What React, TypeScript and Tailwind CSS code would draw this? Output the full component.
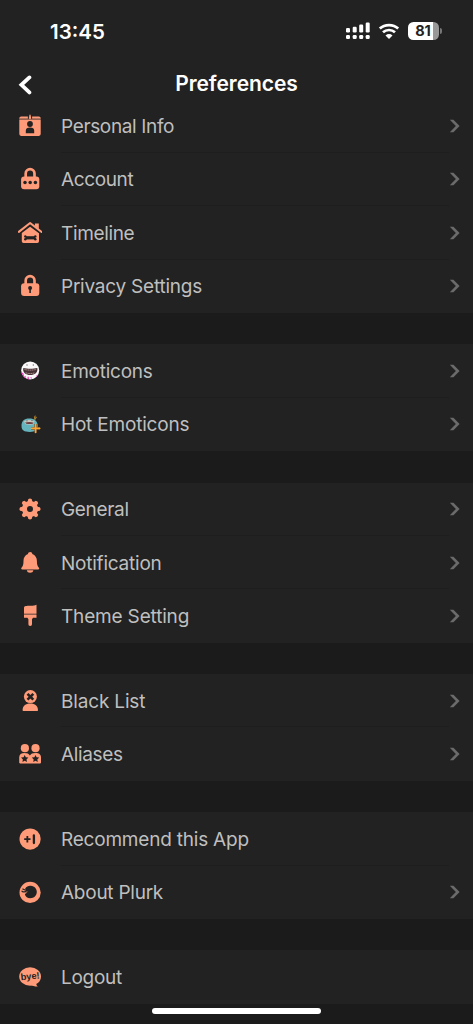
import type { ReactNode } from 'react';

const ORANGE = '#ff9b78';
const DARK = '#222222';

function Icon({ children }: { children: ReactNode }) {
  return (
    <svg width="24" height="24" viewBox="0 0 24 24" className="shrink-0">
      {children}
    </svg>
  );
}

const InfoIcon = () => (
  <Icon>
    <rect x="1.3" y="2.5" width="21.4" height="19.4" rx="1.8" fill={ORANGE} />
    <path d="M1 5.1h22" stroke={DARK} strokeWidth="0.8" />
    <path d="M10.4 1.8v3M13.6 1.8v3" stroke={DARK} strokeWidth="1" />
    <path d="M12 .8v4.5" stroke={ORANGE} strokeWidth="1.4" />
    <circle cx="12" cy="10" r="2.9" fill={DARK} />
    <path d="M7.8 19.2v-2.4c0-2.4 1.4-3.4 4.2-3.4s4.2 1 4.2 3.4v2.4z" fill={DARK} />
  </Icon>
);

const AccountIcon = () => (
  <Icon>
    <path d="M7.7 12V6.6a4.4 4.4 0 0 1 8.8 0V12" fill="none" stroke={ORANGE} strokeWidth="2.7" />
    <rect x="3.1" y="9.4" width="18.2" height="12.8" rx="3" fill={ORANGE} />
    <circle cx="7" cy="15.6" r="1.75" fill={DARK} />
    <circle cx="12.2" cy="15.6" r="1.75" fill={DARK} />
    <circle cx="17.4" cy="15.6" r="1.75" fill={DARK} />
  </Icon>
);

const TimelineIcon = () => (
  <Icon>
    <path d="M16.9 2.6h3.9v7l-3.9-3z" fill={ORANGE} />
    <path d="M3.8 12 12.1 5.7 21 12.2v8.1a1.7 1.7 0 0 1-1.7 1.7H5.5a1.7 1.7 0 0 1-1.7-1.7z" fill={ORANGE} />
    <path d="M.8 11.9 12.1 3l11.5 8.9" fill="none" stroke={DARK} strokeWidth="2.6" />
    <path d="M.8 10.9 12.1 2l11.5 8.9" fill="none" stroke={ORANGE} strokeWidth="2.1" strokeLinecap="round" strokeLinejoin="round" />
    <path d="M7.4 15.2h10v3.2h-10z" fill={DARK} />
    <circle cx="7.3" cy="15.4" r="1.2" fill={DARK} />
    <circle cx="7.3" cy="18.2" r="1.2" fill={DARK} />
    <circle cx="17.3" cy="15.4" r="1.2" fill={DARK} />
    <circle cx="17.3" cy="18.2" r="1.2" fill={DARK} />
  </Icon>
);

const PrivacyIcon = () => (
  <Icon>
    <path d="M7.7 12V6.5a4.4 4.4 0 0 1 8.8 0V12" fill="none" stroke={ORANGE} strokeWidth="2.7" />
    <rect x="3.1" y="9.2" width="18.2" height="12.8" rx="3" fill={ORANGE} />
    <circle cx="12.1" cy="13.9" r="2" fill={DARK} />
    <path d="M12.1 14v5" stroke={DARK} strokeWidth="1.6" />
  </Icon>
);

const EmoticonIcon = () => (
  <Icon>
    <circle cx="12.2" cy="11.4" r="9" fill="#fbf8fa" />
    <path d="M3.5 13c.7 3 2 5 4 6.3l.2-2.6c-1 .2-.8 1.3-1.7.6l-.5-2.8zM9.6 17.7h1.1l.4 2.8-1.7-.6zM12.3 18.3l1.3-.2-.2 2.3z" fill="#f33bbd" />
    <path d="M18.2 16.7l1.8-1.1-1.3 2.5z" fill="#f33bbd" />
    <path d="M5.3 8.9c4 1.1 10 1.1 14 0 .9 4.3-2.6 7.1-7 7.1s-8-2.8-7-7.1z" fill="#473235" />
    <path d="M6.5 10.5c3.6.8 8 .8 11.6 0M7.7 13.8c3.2 1 6 1 9.2 0" fill="none" stroke="#a88b8c" strokeWidth="1" strokeDasharray="1.3 .5" />
    <circle cx="9" cy="6" r=".65" fill="#77696e" />
    <circle cx="15.3" cy="6" r=".65" fill="#77696e" />
  </Icon>
);

const HotEmoticonIcon = () => (
  <Icon>
    <path d="M16.7 8.2c-1.5-2-.9-3.8.7-5.4.2 1.2.4 1.6 1.3 2-.2 1.6-.8 2.5-2 3.4z" fill="#6f5527" />
    <path d="M16.4 4.5l.5 3 1.6-2.5" fill="none" stroke="#b5852b" strokeWidth=".8" />
    <path d="M3.5 13.8c0-5 2.9-7.4 7.7-7.4 5.4 0 8.5 2.6 8.5 7.2 0 4.4-2.2 6.3-7.8 6.3-5.8 0-8.4-1.5-8.4-6.1z" fill="#65b4bd" />
    <path d="M6 9.2c2.6-1.7 7.4-1.7 10.5-.2l-1 3.2c-2.8.7-5.5.5-8.2 0z" fill="#c8c6be" />
    <path d="M7 10.6c2.9-.8 5.8-.8 8.8.1l-1.1 1.1c-2.3.4-4.4.4-6.5 0z" fill="#6c3e41" />
    <circle cx="9" cy="8.8" r=".6" fill="#44535a" />
    <circle cx="14" cy="8.6" r=".6" fill="#44535a" />
    <path d="M17.6 12.1v8.6M13.1 16.4h8.9" stroke="#61492d" strokeWidth="2.5" />
    <path d="M17.6 12.4v8M13.5 16.4h8.2" stroke="#ffa632" strokeWidth="1.6" strokeLinecap="round" />
  </Icon>
);

const TEETH = [0, 45, 90, 135, 180, 225, 270, 315];
const GeneralIcon = () => (
  <Icon>
    {TEETH.map((a) => (
      <path key={a} d="M9.4 6 10.2 2.2Q12 .7 13.8 2.2L14.6 6z" fill={ORANGE} transform={`rotate(${a} 12 12)`} />
    ))}
    <circle cx="12" cy="12" r="5.5" fill="none" stroke={ORANGE} strokeWidth="5" />
  </Icon>
);

const NotificationIcon = () => (
  <Icon>
    <path d="M12.2 1.1c1.3 0 1.9.7 2.1 1.8 2.9 1.1 4.6 3.6 4.6 6.9 0 3.8.5 5.2 2 7 .6.8.2 1.7-.8 1.7H4.3c-1 0-1.4-.9-.8-1.7 1.5-1.8 2-3.2 2-7 0-3.3 1.6-5.8 4.5-6.9.2-1.1.8-1.8 2.2-1.8z" fill={ORANGE} />
    <path d="M8.8 19.2h6.6c-.5 1.8-1.5 2.5-3.3 2.5s-2.8-.7-3.3-2.5z" fill={ORANGE} />
  </Icon>
);

const ThemeIcon = () => (
  <Icon>
    <path d="M6 9.8V4.2c0-2.3 1.5-2.1 4.4-2.4 2.7-.2 5.3-.2 7.5-.9.3-.1.6.1.6.4v8.5zM6 10.6h12.5v3.2H15l-1 1.5v4.5c0 1.4-.6 2.2-1.8 2.2s-1.8-.8-1.8-2.2v-4.5l-1-1.5H6z" fill={ORANGE} />
  </Icon>
);

const BlackListIcon = () => (
  <Icon>
    <circle cx="12.4" cy="7.6" r="6.5" fill={ORANGE} />
    <path d="m9.5 4.8 5.8 5.8m0-5.8-5.8 5.8" stroke={DARK} strokeWidth="2.6" />
    <path d="M4.6 21.2c0-4.5 3-6.8 7.7-6.8S20 16.7 20 21.2q0 .7-.7.7H5.3q-.7 0-.7-.7z" fill={ORANGE} />
  </Icon>
);

const STAR = 'm0-3.7 1.1 2.3 2.6.3-1.9 1.8.5 2.6L0 2.1l-2.3 1.2.5-2.6-1.9-1.8 2.6-.3z';
const AliasesIcon = () => (
  <Icon>
    <circle cx="6.9" cy="6.2" r="4.1" fill={ORANGE} />
    <circle cx="17.5" cy="6.2" r="4.1" fill={ORANGE} />
    <path d="M1.2 20.6v-5.2c0-3.1 2-4.4 5.3-4.4 2.7 0 4.5.8 5.4 2.5.9-1.7 2.7-2.5 5.6-2.5 3.4 0 5.5 1.3 5.5 4.4v5.2q0 .8-.8.8H2q-.8 0-.8-.8z" fill={ORANGE} />
    <path d={STAR} fill={DARK} transform="translate(6.7 16.7)" />
    <path d={STAR} fill={DARK} transform="translate(17.5 16.7)" />
  </Icon>
);

const RecommendIcon = () => (
  <Icon>
    <circle cx="12.1" cy="12.1" r="10.6" fill={ORANGE} />
    <path d="M6.2 12.2h6.3M9.35 9v6.4" stroke={DARK} strokeWidth="1.8" />
    <path d="M15.9 8.5v7.5" stroke={DARK} strokeWidth="2.3" strokeLinecap="round" />
  </Icon>
);

const AboutIcon = () => (
  <Icon>
    <circle cx="12.1" cy="12.4" r="10.6" fill={ORANGE} />
    <path d="M7.2 8.4c1.4-2 3.3-2.8 5.6-2.6 3.7.3 6.1 2.9 6 6.3-.1 3.6-2.8 6.2-6.5 6.2-2.8 0-4.8-1.4-5.4-3.7l1-2.3z" fill={DARK} />
    <path d="m4.8 9 2.2 1M4 11.2c1.2.9 2.6.9 3.8 0" fill="none" stroke={DARK} strokeWidth="1.2" strokeLinecap="round" />
    <path d="M6.4 13.4c1.8 0 2.7-.8 2.6-2.3" fill="none" stroke={ORANGE} strokeWidth=".6" />
  </Icon>
);

const LogoutIcon = () => (
  <Icon>
    <ellipse cx="12.1" cy="11.5" rx="10.9" ry="9.3" fill={ORANGE} />
    <path d="M12 19.5c2.5 1.5 5.1 2.1 7.8 2-1.3-1-1.7-2.3-1.6-4z" fill={ORANGE} />
    <text x="12.2" y="14.4" textAnchor="middle" fontSize="9.3" fontWeight="700" fontFamily="Liberation Sans, sans-serif" fill={DARK} transform="rotate(-6 12 12)">
      bye!
    </text>
  </Icon>
);

type Item = { label: string; Glyph: () => ReactNode; arrow?: boolean; tracking: string };

const sections: Item[][] = [
  [
    { label: 'Personal Info', Glyph: InfoIcon, tracking: 'tracking-[-0.36px]' },
    { label: 'Account', Glyph: AccountIcon, tracking: 'tracking-[-0.38px]' },
    { label: 'Timeline', Glyph: TimelineIcon, tracking: 'tracking-[-0.36px]' },
    { label: 'Privacy Settings', Glyph: PrivacyIcon, tracking: 'tracking-[-0.23px]' },
  ],
  [
    { label: 'Emoticons', Glyph: EmoticonIcon, tracking: 'tracking-[-0.25px]' },
    { label: 'Hot Emoticons', Glyph: HotEmoticonIcon, tracking: 'tracking-[-0.2px]' },
  ],
  [
    { label: 'General', Glyph: GeneralIcon, tracking: 'tracking-[-0.33px]' },
    { label: 'Notification', Glyph: NotificationIcon, tracking: 'tracking-[-0.23px]' },
    { label: 'Theme Setting', Glyph: ThemeIcon, tracking: 'tracking-[-0.17px]' },
  ],
  [
    { label: 'Black List', Glyph: BlackListIcon, tracking: 'tracking-[-0.17px]' },
    { label: 'Aliases', Glyph: AliasesIcon, tracking: 'tracking-[-0.35px]' },
  ],
  [
    { label: 'Recommend this App', Glyph: RecommendIcon, arrow: false, tracking: 'tracking-[-0.21px]' },
    { label: 'About Plurk', Glyph: AboutIcon, tracking: 'tracking-[-0.25px]' },
  ],
  [{ label: 'Logout', Glyph: LogoutIcon, arrow: false, tracking: 'tracking-[-0.3px]' }],
];

function Row({ item, last }: { item: Item; last: boolean }) {
  const { label, Glyph, arrow = true, tracking } = item;
  return (
    <li className="flex h-[53.4px] items-center pl-[18px]">
      <Glyph />
      <div className={`ml-[19px] flex h-full w-[388px] items-center border-b pt-[3px] ${last ? 'border-transparent' : 'border-[#1e1e1e]'}`}>
        <span className={`whitespace-nowrap text-[19px] leading-6 text-[#bfbfbf] ${tracking}`}>{label}</span>
      </div>
      {arrow && (
        <svg width="12" height="14" viewBox="0 0 12 14" className="shrink-0">
          <path d="M.8.7h3.6L10.6 7l-6.2 6.3H.8L6.9 7z" fill="#6b6b6b" />
        </svg>
      )}
    </li>
  );
}

function StatusBar() {
  return (
    <div className="flex h-[62px] items-center justify-between pl-[50px] pr-[31px]">
      <span className="pt-px text-[20.5px] leading-6 font-semibold">13:45</span>
      <div className="flex items-center">
        <svg width="25" height="18" viewBox="0 0 25 18" fill="white">
          <rect x="0" y="6" width="4" height="4.5" rx="1.2" />
          <rect x="6.7" y="4.7" width="4" height="5.8" rx="1.2" />
          <rect x="13.2" y="2.6" width="4" height="7.9" rx="1.2" />
          <rect x="19.7" y=".5" width="4" height="10" rx="1.2" />
          <rect x="0" y="13" width="4" height="4" rx="1.2" />
          <rect x="6.7" y="13" width="4" height="4" rx="1.2" />
          <rect x="13.2" y="13" width="4" height="4" rx="1.2" />
          <rect x="19.7" y="13" width="4" height="4" rx="1.2" />
        </svg>
        <svg width="22" height="17" viewBox="0 0 22 17" className="ml-[7px]">
          <path d="M1.8 5.6c5-4.7 13.4-4.7 18.4 0M5 9.3c3.3-3.1 8.7-3.1 12 0" fill="none" stroke="white" strokeWidth="2.7" />
          <path d="M7.5 12.4c2-1.8 5-1.8 7 0L11 16z" fill="white" />
        </svg>
        <div className="ml-[8px] flex h-[18px] w-[31px] items-center justify-center rounded-[5.5px] bg-[linear-gradient(90deg,white_82%,#989898_82%)] pr-px text-[14.5px] leading-none font-bold text-[#222222]">
          81
        </div>
        <div className="ml-[1px] h-[6px] w-[2px] rounded-r-full bg-[#777777]" />
      </div>
    </div>
  );
}

export default function App() {
  return (
    <main className="flex h-[1024px] w-[473px] flex-col overflow-hidden bg-[#1b1b1b] font-[Inter,sans-serif] text-white">
      <header className="h-[99.4px] shrink-0 bg-[#222222]">
        <StatusBar />
        <div className="grid h-[37px] grid-cols-[60px_1fr_60px] items-center pt-[7px]">
          <button aria-label="Back" className="ml-[18px] mt-[2px] w-4">
            <svg width="16" height="20" viewBox="0 0 16 20">
              <path d="M11.4 2.4 3.4 9.8l8 7.6" fill="none" stroke="white" strokeWidth="3.8" strokeLinecap="round" />
            </svg>
          </button>
          <h1 className="text-center text-[21px] leading-6 font-semibold tracking-[-0.05px]">Preferences</h1>
        </div>
      </header>
      <div className="flex shrink-0 flex-col gap-[31.4px]">
        {sections.map((items) => (
          <ul key={items[0].label} className="bg-[#222222]">
            {items.map((item, i) => (
              <Row key={item.label} item={item} last={i === items.length - 1} />
            ))}
          </ul>
        ))}
      </div>
      <div className="mx-auto mt-[4px] h-[6px] w-[169px] shrink-0 rounded-full bg-white" />
    </main>
  );
}
